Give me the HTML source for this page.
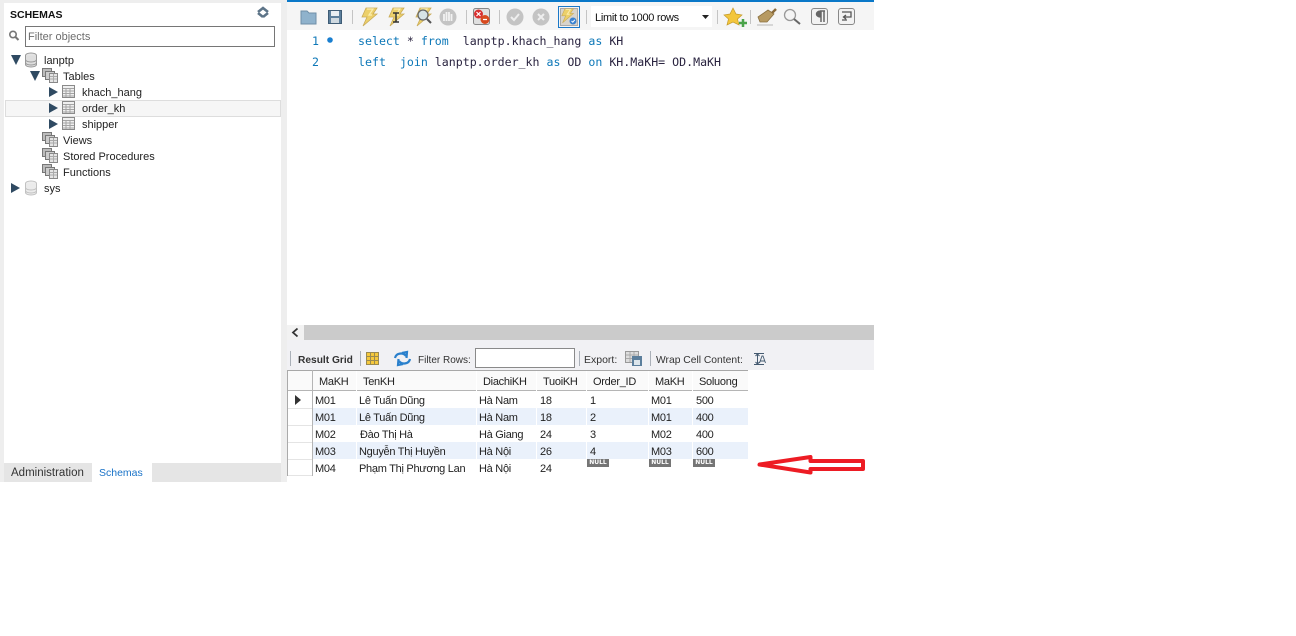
<!DOCTYPE html>
<html><head><meta charset="utf-8"><style>
html,body{margin:0;padding:0;background:#fff}
body{width:1296px;height:636px;position:relative;overflow:hidden;font-family:"Liberation Sans","DejaVu Sans",sans-serif;font-size:11px;color:#222}
.b{position:absolute}
.t{position:absolute;white-space:nowrap;line-height:16px;height:16px;margin-top:2px}
.g .t{font-size:11px;letter-spacing:-.28px;margin-top:1px}
.m{font-family:"DejaVu Sans Mono","Liberation Mono",monospace;font-size:11.6px;color:#2a2440;line-height:20px;height:20px;margin-top:0}
.k{color:#0e78b8}
.n{position:absolute;top:459px;height:8px;background:#757575;color:#fff;font:bold 6px/8px "DejaVu Sans",sans-serif;text-align:center}
svg{position:absolute;left:0;top:0}
</style></head><body>
<div class="b" style="left:0;top:0;width:874px;height:482px;background:#eee"></div>
<div class="b" style="left:4px;top:3px;width:277px;height:460px;background:#fff"></div>
<div class="b" style="left:4px;top:463px;width:277px;height:19px;background:#e5e5e5"></div>
<div class="b" style="left:92px;top:463px;width:60px;height:19px;background:#fff"></div>
<div class="b" style="left:5px;top:100px;width:274px;height:15px;background:#f6f6f6;border:1px solid #ddd"></div>
<div class="b" style="left:25px;top:26px;width:248px;height:19px;background:#fff;border:1px solid #767676"></div>
<div class="t" style="left:10px;top:5px;font-weight:bold;font-size:10.5px;color:#111">SCHEMAS</div>
<div class="t" style="left:28px;top:27px;color:#6d6d6d">Filter objects</div>
<div class="t" style="left:44px;top:51px">lanptp</div>
<div class="t" style="left:63px;top:67px">Tables</div>
<div class="t" style="left:82px;top:83px">khach_hang</div>
<div class="t" style="left:82px;top:99px">order_kh</div>
<div class="t" style="left:82px;top:115px">shipper</div>
<div class="t" style="left:63px;top:131px">Views</div>
<div class="t" style="left:63px;top:147px">Stored Procedures</div>
<div class="t" style="left:63px;top:163px">Functions</div>
<div class="t" style="left:44px;top:179px">sys</div>
<div class="t" style="left:11px;top:463px;color:#333;font-size:11.5px">Administration</div>
<div class="t" style="left:99px;top:463px;color:#1a73c8;font-size:10.5px">Schemas</div>

<div class="b" style="left:287px;top:0;width:587px;height:30px;background:#f5f5f5"></div>
<div class="b" style="left:287px;top:0;width:587px;height:2px;background:#0a78c8"></div>
<div class="b" style="left:287px;top:30px;width:587px;height:295px;background:#fff"></div>
<div class="b" style="left:591px;top:6px;width:121px;height:21px;background:#fff"></div>
<div class="t" style="left:595px;top:8px;color:#111;font-size:11px;letter-spacing:-.3px">Limit to 1000 rows</div>
<div class="t m" style="left:312px;top:31px;color:#0e78b8">1</div>
<div class="t m" style="left:312px;top:52px;color:#0e78b8">2</div>
<div class="t m" style="left:358px;top:31px;white-space:pre"><span class="k">select</span> * <span class="k">from</span>  lanptp.khach_hang <span class="k">as</span> KH</div>
<div class="t m" style="left:358px;top:52px;white-space:pre"><span class="k">left</span>  <span class="k">join</span> lanptp.order_kh <span class="k">as</span> OD <span class="k">on</span> KH.MaKH= OD.MaKH</div>

<div class="b" style="left:287px;top:325px;width:17px;height:15px;background:#f2f2f2"></div>
<div class="b" style="left:304px;top:325px;width:570px;height:15px;background:#cbcbcb"></div>
<div class="b" style="left:287px;top:340px;width:587px;height:30px;background:#f1f1f4"></div>
<div class="b" style="left:287px;top:370px;width:587px;height:112px;background:#fff"></div>
<div class="b" style="left:475px;top:348px;width:98px;height:18px;background:#fff;border:1px solid #8a8a8a"></div>
<div class="t" style="left:298px;top:351px;font-weight:bold;font-size:10.2px;color:#333">Result Grid</div>
<div class="t" style="left:418px;top:351px;font-size:10px;color:#333">Filter Rows:</div>
<div class="t" style="left:584px;top:350px;font-size:10.5px;color:#333">Export:</div>
<div class="t" style="left:656px;top:351px;font-size:10.3px;color:#333">Wrap Cell Content:</div>

<div class="b" style="left:288px;top:371px;width:460px;height:20px;background:#fafafa"></div>
<div class="b" style="left:313px;top:408px;width:435px;height:17px;background:#eaf1fb"></div>
<div class="b" style="left:313px;top:442px;width:435px;height:17px;background:#eaf1fb"></div>
<div class="b" style="left:287px;top:370px;width:461px;height:1px;background:#a8a8a8"></div>
<div class="b" style="left:287px;top:390px;width:461px;height:1px;background:#b5b5b5"></div>
<div class="b" style="left:287px;top:370px;width:1px;height:106px;background:#aaa"></div>
<div class="b" style="left:312px;top:370px;width:1px;height:106px;background:#b5b5b5"></div>
<div class="b" style="left:288px;top:408px;width:24px;height:1px;background:#e4e4e4"></div>
<div class="b" style="left:288px;top:425px;width:24px;height:1px;background:#e4e4e4"></div>
<div class="b" style="left:288px;top:442px;width:24px;height:1px;background:#e4e4e4"></div>
<div class="b" style="left:288px;top:459px;width:24px;height:1px;background:#e4e4e4"></div>
<div class="b" style="left:288px;top:475px;width:24px;height:1px;background:#e4e4e4"></div>
<div class="b" style="left:356px;top:371px;width:1px;height:88px;background:#fff"></div>
<div class="b" style="left:476px;top:371px;width:1px;height:88px;background:#fff"></div>
<div class="b" style="left:536px;top:371px;width:1px;height:88px;background:#fff"></div>
<div class="b" style="left:586px;top:371px;width:1px;height:88px;background:#fff"></div>
<div class="b" style="left:648px;top:371px;width:1px;height:88px;background:#fff"></div>
<div class="b" style="left:692px;top:371px;width:1px;height:88px;background:#fff"></div>

<div class="g">
<div class="t" style="left:319px;top:373px">MaKH</div><div class="t" style="left:363px;top:373px">TenKH</div><div class="t" style="left:483px;top:373px">DiachiKH</div><div class="t" style="left:543px;top:373px">TuoiKH</div><div class="t" style="left:593px;top:373px">Order_ID</div><div class="t" style="left:655px;top:373px">MaKH</div><div class="t" style="left:699px;top:373px">Soluong</div>

<div class="t" style="left:315px;top:392px">M01</div><div class="t" style="left:359px;top:392px">Lê Tuấn Dũng</div><div class="t" style="left:479px;top:392px">Hà Nam</div><div class="t" style="left:540px;top:392px">18</div><div class="t" style="left:590px;top:392px">1</div><div class="t" style="left:651px;top:392px">M01</div><div class="t" style="left:696px;top:392px">500</div>
<div class="t" style="left:315px;top:409px">M01</div><div class="t" style="left:359px;top:409px">Lê Tuấn Dũng</div><div class="t" style="left:479px;top:409px">Hà Nam</div><div class="t" style="left:540px;top:409px">18</div><div class="t" style="left:590px;top:409px">2</div><div class="t" style="left:651px;top:409px">M01</div><div class="t" style="left:696px;top:409px">400</div>
<div class="t" style="left:315px;top:426px">M02</div><div class="t" style="left:360px;top:426px">Đào Thị Hà</div><div class="t" style="left:479px;top:426px">Hà Giang</div><div class="t" style="left:540px;top:426px">24</div><div class="t" style="left:590px;top:426px">3</div><div class="t" style="left:651px;top:426px">M02</div><div class="t" style="left:696px;top:426px">400</div>
<div class="t" style="left:315px;top:443px">M03</div><div class="t" style="left:359px;top:443px">Nguyễn Thị Huyền</div><div class="t" style="left:479px;top:443px">Hà Nội</div><div class="t" style="left:540px;top:443px">26</div><div class="t" style="left:590px;top:443px">4</div><div class="t" style="left:651px;top:443px">M03</div><div class="t" style="left:696px;top:443px">600</div>
<div class="t" style="left:315px;top:460px">M04</div><div class="t" style="left:359px;top:460px">Phạm Thị Phương Lan</div><div class="t" style="left:479px;top:460px">Hà Nội</div><div class="t" style="left:540px;top:460px">24</div>
</div>
<div class="n" style="left:587px;width:22px">NULL</div><div class="n" style="left:649px;width:22px">NULL</div><div class="n" style="left:693px;width:22px">NULL</div>

<svg width="1296" height="636" viewBox="0 0 1296 636" fill="none">
<defs>
<g id="db"><ellipse cx="8" cy="3.5" rx="5.500" ry="2.500" fill="#e4e4e4" stroke="#999"/><path d="M2.500 3.500V12.500C2.500 14 5 15 8 15S13.500 14 13.500 12.500V3.500" fill="#dedede" stroke="#999"/><path d="M2.500 7.500C2.500 9 5 10 8 10S13.500 9 13.500 7.500M2.500 10.500C2.500 12 5 13 8 13S13.500 12 13.500 10.500" stroke="#999"/></g>
<g id="tb"><rect x=".5" y=".5" width="12" height="12" fill="#f0f0f0" stroke="#8a8a8a"/><path d="M1 3.500H12M1 6H12M1 8.500H12M1 11H12M4 3V12M8 3V12" stroke="#a4a4a4"/></g>
<g id="gr"><rect x=".5" y=".5" width="9" height="8" fill="#bbb" stroke="#777"/><rect x="3.500" y="3.500" width="9" height="8" fill="#ccc" stroke="#777"/><rect x="7.500" y="5.500" width="8" height="9" fill="#e4e4e4" stroke="#888"/><path d="M8 8.500H15M8 11H15M11.500 6V14" stroke="#aaa"/></g>
<g id="bolt"><path d="M5 1H16L12 7H16L2 19L6 10H1Z" fill="#ecd06a" stroke="#c9ab58" stroke-width=".8"/><path d="M6 2H12L8 8H11" stroke="#fbeeb0" stroke-width="1.200"/></g>
</defs>

<!-- sidebar -->
<path d="M258 12L263 8L268 12M263 17L258 13M263 17L268 13" stroke="#5d7488" stroke-width="2.600"/>
<circle cx="13" cy="34.500" r="3.200" stroke="#777" stroke-width="1.600"/><path d="M15.500 37L18.500 40" stroke="#777" stroke-width="2"/>
<path d="M11 55H21L16 65Z" fill="#2f4a62"/><path d="M30 71H40L35 81Z" fill="#2f4a62"/>
<path d="M49 87V97L58 92Z" fill="#2f4a62"/><path d="M49 103V113L58 108Z" fill="#2f4a62"/><path d="M49 119V129L58 124Z" fill="#2f4a62"/>
<path d="M11 183V193L20 188Z" fill="#2f4a62"/>
<use href="#db" x="23" y="52"/><use href="#db" x="23" y="180" opacity=".6"/>
<use href="#gr" x="42" y="68"/><use href="#gr" x="42" y="132"/><use href="#gr" x="42" y="148"/><use href="#gr" x="42" y="164"/>
<use href="#tb" x="62" y="85"/><use href="#tb" x="62" y="101"/><use href="#tb" x="62" y="117"/>

<!-- toolbar -->
<path d="M301 11H307L309 13H316V24H301Z" fill="#8fb2cc" stroke="#6f8fa8"/>
<rect x="328.500" y="10.500" width="13" height="13" fill="#5c7f9c" stroke="#3f5c75"/><rect x="331" y="11" width="8" height="5" fill="#e8eef2"/><rect x="331" y="18" width="8" height="5" fill="#cfd9e0"/>
<path d="M352.500 10V24M466.500 10V24M499.500 10V24M586.500 10V24M717.500 10V24M750.500 10V24" stroke="#c4c4c4"/>
<use href="#bolt" x="361" y="7"/><use href="#bolt" x="388" y="7"/><use href="#bolt" x="415" y="7"/>
<path d="M393 13H399M393 22H399M396 13V22" stroke="#333" stroke-width="1.500"/>
<circle cx="423" cy="15" r="5" fill="#d7e3e6" stroke="#666" stroke-width="1.300"/><path d="M427 19L431 23" stroke="#555" stroke-width="2"/>
<circle cx="448" cy="17" r="8.500" fill="#c4c4c4"/><path d="M444 21V14M446.500 21V12M449 21V12M451.500 21V14" stroke="#f2f2f2" stroke-width="1.800"/>
<rect x="473.500" y="8.500" width="16" height="16" rx="2" fill="#e0e0e0" stroke="#888"/><circle cx="478.500" cy="14" r="4.500" fill="#d83030"/><circle cx="485" cy="19.500" r="4.500" fill="#d84a20"/><path d="M476.500 12L480.500 16M480.500 12L476.500 16M483 19.500H487" stroke="#fff" stroke-width="1.200"/>
<circle cx="515" cy="17" r="8.500" fill="#c4c4c4"/><path d="M511 17L514 20L519 14" stroke="#eee" stroke-width="2"/>
<circle cx="541" cy="17" r="8.500" fill="#c4c4c4"/><path d="M538 14L544 20M544 14L538 20" stroke="#eee" stroke-width="2"/>
<rect x="558.500" y="6.500" width="21" height="21" fill="#f5f5f5" stroke="#1a78c8"/><rect x="560.500" y="8.500" width="17" height="17" fill="#d8d4cc" stroke="#aaa"/><use href="#bolt" transform="translate(561 8) scale(.78)"/><circle cx="573" cy="21" r="3.500" fill="#3b82d0"/><path d="M571.500 21L572.800 22.200L574.800 19.800" stroke="#fff"/>
<path d="M702 15H709L705.500 19Z" fill="#222"/>
<path d="M733 8L736 14L742 15L737.500 19L739 25L733 22L727 25L728.500 19L724 15L730 14Z" fill="#f3c63c" stroke="#c49a2a" stroke-width=".7"/><path d="M743 19V27M739 23H747" stroke="#4aa34a" stroke-width="2.500"/>
<path d="M758 17L768 10L774 14L767 22L760 22Z" fill="#b79a62" stroke="#8a7040" stroke-width=".8"/><path d="M772 13L776 9" stroke="#8a6a3a" stroke-width="2.500"/><path d="M757 25H773" stroke="#ccc" stroke-width="1.500"/>
<circle cx="790" cy="15" r="5.500" fill="#f4f4f4" stroke="#999" stroke-width="1.300"/><path d="M794 19L800 24" stroke="#666" stroke-width="2"/>
<rect x="811.500" y="8.500" width="16" height="16" rx="2.500" fill="#f2f2f2" stroke="#888"/><path d="M821 11V22M824 11V22M820 11H825M821 11C815 11 815 17 821 17" stroke="#666" stroke-width="1.500" fill="#666"/>
<rect x="838.500" y="8.500" width="16" height="16" rx="2.500" fill="#f2f2f2" stroke="#888"/><path d="M842 12H851V17H844M846 15L843.500 17L846 19M842 20H847" stroke="#555" stroke-width="1.300"/>

<circle cx="330" cy="40" r="2.800" fill="#1a7fd0"/>
<path d="M297.500 328.500L293 332.500L297.500 336.500" stroke="#333" stroke-width="1.800"/>

<!-- result toolbar -->
<path d="M290.500 351V366M360.500 351V366M579.500 351V366M650.500 351V366" stroke="#aab0b8"/>
<rect x="366.500" y="352.500" width="12" height="12" fill="#f5c83c" stroke="#9a8a50"/><path d="M370.500 353V364M374.500 353V364M367 356.500H378M367 360.500H378" stroke="#9a8a50"/>
<path d="M395 358C396 353 403 352 406 356M402 353L407 352L406.500 358" stroke="#2a80cc" stroke-width="2.200"/><path d="M410 359C409 364 402 365 399 361M403 364L398 365L398.500 359" stroke="#2a80cc" stroke-width="2.200"/>
<rect x="625.500" y="351.500" width="13" height="11" fill="#ddd" stroke="#999"/><path d="M626 355H638M626 358.500H638M630 352V362M634 352V362" stroke="#aaa"/><rect x="632" y="356" width="10" height="10" fill="#5c7f9c"/><rect x="634" y="360" width="6" height="5" fill="#dde6ec"/>
<path d="M754 353.500H764M754 364.500H764M757.500 354V364M755.500 356L757.500 354L759.500 356M755.500 362L757.500 364L759.500 362" stroke="#445a70"/><path d="M759.500 363L762 356H763L765.500 363M760.500 361H764.500" stroke="#445a70" stroke-width=".9"/>

<path d="M295 395V405L301 400Z" fill="#333"/>

<!-- red arrow -->
<path d="M759.500 464.500L810.500 457V461H863V469H810.500V472.500Z" stroke="#ed1c24" stroke-width="4" stroke-linejoin="round" fill="#fff"/>
</svg>
</body></html>
